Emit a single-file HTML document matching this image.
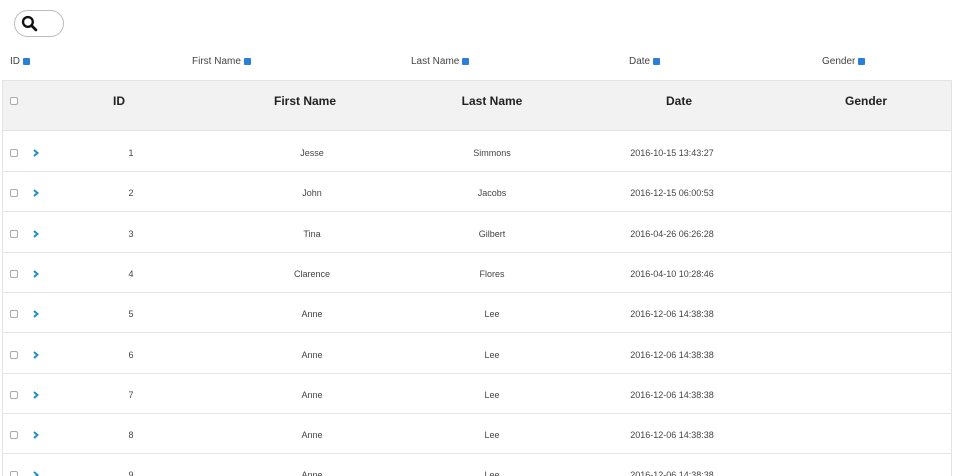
<!DOCTYPE html>
<html><head><style>
html,body{margin:0;width:960px;height:476px;overflow:hidden}
body{background:#fff;font-family:"Liberation Sans",sans-serif;color:#333;position:relative}
.a{position:absolute;white-space:nowrap}
.c{transform:translateX(-50%)}
.cb{position:absolute;width:6px;height:6px;border:1px solid #aaa;border-radius:2px;background:#fff}
.bc{display:inline-block;width:7px;height:7px;background:#2b7fd9;border-radius:1px;vertical-align:-1px;margin-left:3px}
.h{font-weight:bold;font-size:12px;color:#222}
.d{font-size:9px;color:#444}
.ln{position:absolute;left:3px;width:948px;height:1px;background:#e6e6e6}
.ch{position:absolute;left:33px}
</style></head><body>
<div class="a" style="left:14px;top:10px;width:50px;height:27px;border:1px solid #bbb;border-radius:14px;box-sizing:border-box"></div>
<svg class="a" style="left:21px;top:15px" width="17" height="17" viewBox="0 0 16 16"><circle cx="6.5" cy="6.5" r="4.6" fill="none" stroke="#111" stroke-width="2.2"/><line x1="10" y1="10" x2="14" y2="14" stroke="#111" stroke-width="2.6" stroke-linecap="round"/></svg>
<div class="a" style="left:10px;top:56px;font-size:10px;color:#444">ID<span class="bc"></span></div>
<div class="a" style="left:192px;top:56px;font-size:10px;color:#444">First Name<span class="bc"></span></div>
<div class="a" style="left:411px;top:56px;font-size:10px;color:#444">Last Name<span class="bc"></span></div>
<div class="a" style="left:629px;top:56px;font-size:10px;color:#444">Date<span class="bc"></span></div>
<div class="a" style="left:822px;top:56px;font-size:10px;color:#444">Gender<span class="bc"></span></div>
<div class="a" style="left:2px;top:80px;width:950px;height:400px;border:1px solid #e3e3e3;border-bottom:none;box-sizing:border-box"></div>
<div class="a" style="left:3px;top:81px;width:948px;height:49px;background:#f2f2f3;border-bottom:1px solid #e3e3e3"></div>
<div class="cb" style="left:10px;top:97px"></div>
<div class="a c h" style="left:119px;top:94px">ID</div>
<div class="a c h" style="left:305px;top:94px">First Name</div>
<div class="a c h" style="left:492px;top:94px">Last Name</div>
<div class="a c h" style="left:679px;top:94px">Date</div>
<div class="a c h" style="left:866px;top:94px">Gender</div>
<div id="rows"></div>
<script>
var data=[[1,"Jesse","Simmons","2016-10-15 13:43:27"],[2,"John","Jacobs","2016-12-15 06:00:53"],[3,"Tina","Gilbert","2016-04-26 06:26:28"],[4,"Clarence","Flores","2016-04-10 10:28:46"],[5,"Anne","Lee","2016-12-06 14:38:38"],[6,"Anne","Lee","2016-12-06 14:38:38"],[7,"Anne","Lee","2016-12-06 14:38:38"],[8,"Anne","Lee","2016-12-06 14:38:38"],[9,"Anne","Lee","2016-12-06 14:38:38"]];
var h="";data.forEach(function(r,i){var y=153+i*40.3;
h+='<div class="ln" style="top:'+Math.round(y+18)+'px"></div>';
h+='<div class="cb" style="left:10px;top:'+Math.round(y-4)+'px"></div>';
h+='<svg class="ch" style="top:'+Math.round(y-4)+'px" width="6" height="8" viewBox="0 0 6 8"><path d="M1 1L4.5 4L1 7" fill="none" stroke="#1e8fc4" stroke-width="2"/></svg>';
h+='<div class="a c d" style="left:131px;top:'+Math.round(y-5)+'px">'+r[0]+'</div>';
h+='<div class="a c d" style="left:312px;top:'+Math.round(y-5)+'px">'+r[1]+'</div>';
h+='<div class="a c d" style="left:492px;top:'+Math.round(y-5)+'px">'+r[2]+'</div>';
h+='<div class="a c d" style="left:672px;top:'+Math.round(y-5)+'px">'+r[3]+'</div>';});
document.getElementById("rows").innerHTML=h;
</script>
</body></html>
